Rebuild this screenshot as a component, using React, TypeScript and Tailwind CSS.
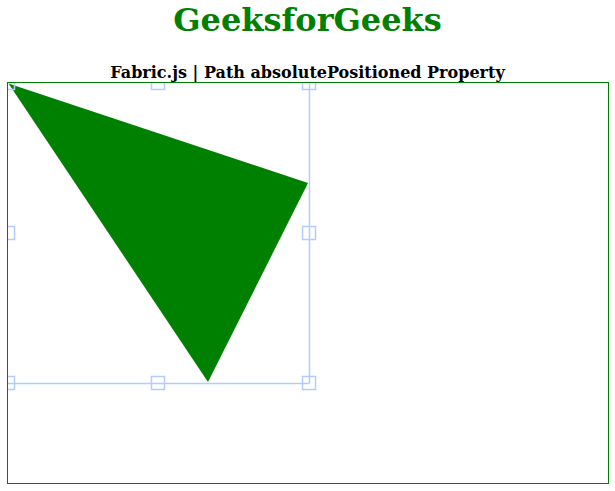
const SEL = 'rgb(178,204,255)';

// control squares (13px, stroked) around the selection box
const CONTROLS: [number, number][] = [
  [-6.5, -6.5],
  [143.5, -6.5],
  [294.5, -6.5],
  [-6.5, 143.5],
  [294.5, 143.5],
  [-6.5, 293.5],
  [143.5, 293.5],
  [294.5, 293.5],
];

function FabricCanvas() {
  return (
    <div className="ml-[7px] w-[602px] h-[402px] border border-[#008000] bg-white">
      <svg width="600" height="400" viewBox="0 0 600 400" className="block">
        <polygon points="0.5,0.5 300,100 200,299" fill="#008000" />
        <g fill="none" stroke={SEL} strokeWidth="1.5">
          <line x1="-1" y1="-1" x2="301.5" y2="-1" />
          <line x1="-1" y1="-1" x2="-1" y2="300.5" />
          <line x1="301.5" y1="-1" x2="301.5" y2="300.5" />
          <line x1="-1" y1="300.5" x2="301.5" y2="300.5" />
          {CONTROLS.map(([x, y], i) => (
            <rect key={i} x={x} y={y} width="13" height="13" />
          ))}
        </g>
      </svg>
    </div>
  );
}

export default function App() {
  return (
    <div className="w-[615px] h-[491px] bg-white font-['DejaVu_Serif',serif] overflow-hidden">
      <h1 className="pt-[2px] text-center text-[32px] leading-[37px] font-bold text-[#008000]">
        GeeksforGeeks
      </h1>
      <p className="mt-[24px] text-center text-[16px] leading-[19px] font-bold text-black">
        Fabric.js | Path absolutePositioned Property
      </p>
      <FabricCanvas />
    </div>
  );
}
